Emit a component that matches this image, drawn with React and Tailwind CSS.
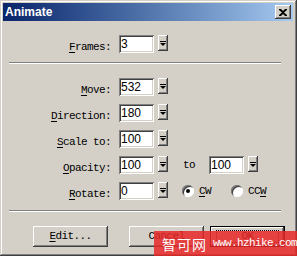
const raised =
  'bg-[#d4d0c8] shadow-[inset_-1px_-1px_#404040,inset_1px_1px_#ffffff,inset_-2px_-2px_#808080,inset_2px_2px_#d4d0c8]';
const sunken =
  'bg-white shadow-[inset_1px_1px_#808080,inset_-1px_-1px_#ffffff,inset_2px_2px_#404040,inset_-2px_-2px_#d4d0c8]';
const mono = "font-['Liberation_Mono',monospace] text-[11px] tracking-[-0.6px] text-black whitespace-nowrap";

function Label({ k, rest }) {
  return (
    <span className={mono}>
      <span className="underline underline-offset-2">{k}</span>
      {rest}
    </span>
  );
}

function Spin({ value }) {
  return (
    <div className="flex items-start">
      <div className={`${sunken} w-[35px] h-[18px] pl-[2px] pt-[2px] font-['Liberation_Sans',sans-serif] text-[12px] leading-[14px] text-black`}>
        {value}
      </div>
      <div className={`${raised} ml-[4px] w-[10px] h-[16px] flex items-center justify-center`}>
        <svg width="6" height="5" viewBox="0 0 6 5">
          <rect x="0" y="0" width="6" height="1" fill="#000" />
          <polygon points="0,2 6,2 3,5" fill="#000" />
        </svg>
      </div>
    </div>
  );
}

function Row({ k, rest, value, children }) {
  return (
    <div className="flex items-center h-[18px]">
      <div className="w-[108px] text-right">
        <Label k={k} rest={rest} />
      </div>
      <div className="ml-[8px]">
        <Spin value={value} />
      </div>
      {children}
    </div>
  );
}

function Separator() {
  return <div className="ml-[6px] w-[272px] h-[2px] border-t border-[#808080] border-b border-b-white" />;
}

function Radio({ checked }) {
  return (
    <div className="w-[12px] h-[12px] rounded-full bg-white shadow-[inset_1px_1px_#808080,inset_-1px_-1px_#ffffff,inset_2px_2px_#404040] flex items-center justify-center">
      {checked && <div className="w-[4px] h-[4px] rounded-full bg-black" />}
    </div>
  );
}

function Button({ children, isDefault }) {
  return (
    <div className={`${isDefault ? 'border border-black' : ''} w-[75px] h-[21px]`}>
      <div className={`${raised} w-full h-full flex items-center justify-center`}>
        {isDefault ? (
          <div className="border border-dotted border-black w-[63px] h-[13px] flex items-center justify-center">{children}</div>
        ) : (
          children
        )}
      </div>
    </div>
  );
}

export default function App() {
  return (
    <div className="relative w-[297px] h-[256px] overflow-hidden bg-[#d4d0c8] p-[3px] shadow-[inset_-1px_-1px_#404040,inset_1px_1px_#d4d0c8,inset_-2px_-2px_#808080,inset_2px_2px_#ffffff]">
      {/* title bar */}
      <div className="h-[18px] w-[290px] flex items-center justify-between pl-[2px] pr-[2px] bg-gradient-to-r from-[#0a246a] to-[#a6caf0]">
        <span className="font-['Liberation_Sans',sans-serif] font-bold text-[12px] text-white">Animate</span>
        <div className={`${raised} w-[16px] h-[14px] flex items-center justify-center`}>
          <svg width="8" height="7" viewBox="0 0 8 7">
            <path d="M0 0h2l2 2 2-2h2v1L5 3.5 8 6v1H6L4 5 2 7H0V6l3-2.5L0 1z" fill="#000" />
          </svg>
        </div>
      </div>

      <div className="mt-[14px]">
        <Row k="F" rest="rames:" value="3" />
      </div>

      <div className="mt-[9px]">
        <Separator />
      </div>

      <div className="mt-[14px] flex flex-col gap-[8px]">
        <Row k="M" rest="ove:" value="532" />
        <Row k="D" rest="irection:" value="180" />
        <Row k="S" rest="cale to:" value="100" />
        <Row k="O" rest="pacity:" value="100">
          <span className={`${mono} ml-[15px]`}>to</span>
          <div className="ml-[14px]">
            <Spin value="100" />
          </div>
        </Row>
        <Row k="R" rest="otate:" value="0">
          <div className="ml-[14px] flex items-center">
            <Radio checked />
            <span className={`${mono} ml-[5px]`}>
              <span className="underline underline-offset-2">C</span>W
            </span>
          </div>
          <div className="ml-[20px] flex items-center">
            <Radio />
            <span className={`${mono} ml-[5px]`}>
              CC<span className="underline underline-offset-2">W</span>
            </span>
          </div>
        </Row>
      </div>

      <div className="mt-[10px]">
        <Separator />
      </div>

      <div className="mt-[14px] flex items-center">
        <div className="ml-[30px]">
          <Button>
            <Label k="E" rest="dit..." />
          </Button>
        </div>
        <div className="ml-[21px]">
          <Button>
            <span className={mono}>Cancel</span>
          </Button>
        </div>
        <div className="ml-[6px]">
          <Button isDefault>
            <span className={mono}>OK</span>
          </Button>
        </div>
      </div>

      {/* watermark */}
      <div className="absolute left-[154px] top-[231px] w-[143px] h-[25px] bg-[rgba(232,40,40,0.85)] flex items-center pl-[8px] whitespace-nowrap">
        <span className="shrink-0 font-['Noto_Sans_CJK_SC',sans-serif] text-[14px] tracking-[1px] text-white leading-none">智可网</span>
        <span className="shrink-0 ml-[6px] font-['Liberation_Mono',monospace] text-[11px] tracking-[-0.6px] text-white">www.hzhike.com</span>
      </div>
    </div>
  );
}
